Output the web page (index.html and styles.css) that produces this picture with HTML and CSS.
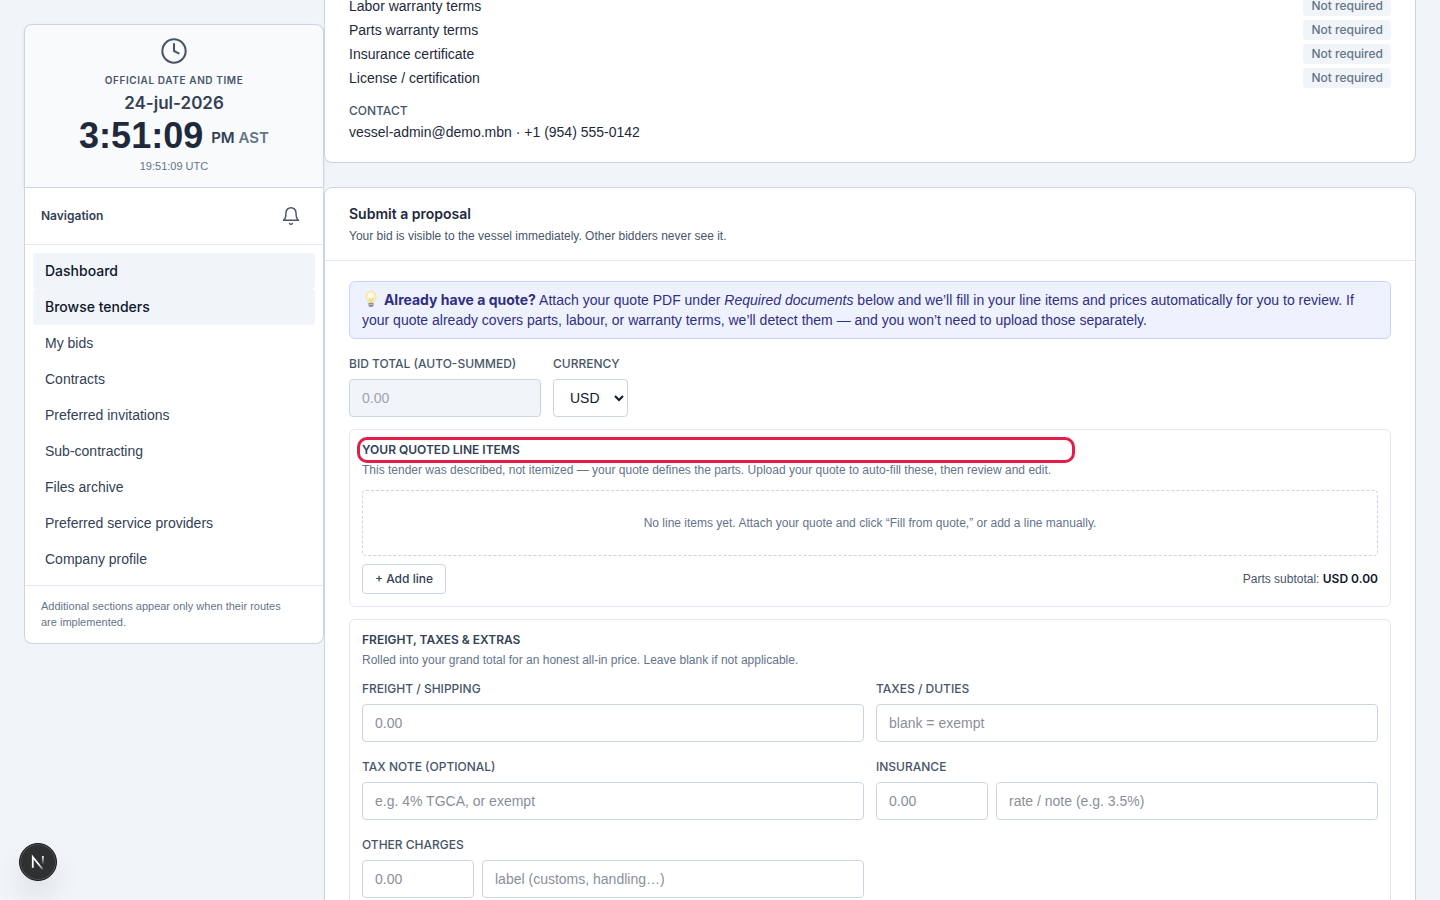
FILE: index.html
```html
<!DOCTYPE html>
<html lang="en">
<head>
<meta charset="utf-8">
<meta name="viewport" content="width=device-width, initial-scale=1">
<title>Submit a proposal</title>
<link rel="stylesheet" href="styles.css">
</head>
<body>
<div class="shell">
  <aside class="sidebar">
    <section class="clock">
      <svg class="clock-icon" viewBox="0 0 24 24" fill="none" stroke="currentColor" stroke-width="1.75" stroke-linecap="round" stroke-linejoin="round" aria-hidden="true"><circle cx="12" cy="12" r="10"/><path d="M12 6v6l4 2"/></svg>
      <p class="clock-label">Official date and time</p>
      <p class="clock-date">24-jul-2026</p>
      <p class="clock-row"><span class="clock-time">3:51:09</span><span class="clock-zone"><span class="clock-pm">PM</span> AST</span></p>
      <p class="clock-utc">19:51:09 UTC</p>
    </section>
    <div class="panel">
      <div class="nav-head">
        <h2 class="nav-title">Navigation</h2>
        <button class="bell" type="button" aria-label="Notifications">
          <svg class="bell-icon" viewBox="0 0 24 24" fill="none" stroke="currentColor" stroke-width="1.75" stroke-linecap="round" stroke-linejoin="round" aria-hidden="true"><path d="M18 8A6 6 0 0 0 6 8c0 7-3 9-3 9h18s-3-2-3-9"/><path d="M13.73 21a2 2 0 0 1-3.46 0"/></svg>
        </button>
      </div>
      <nav class="nav">
        <a class="nav-link active" href="#">Dashboard</a>
        <a class="nav-link active" href="#">Browse tenders</a>
        <a class="nav-link" href="#">My bids</a>
        <a class="nav-link" href="#">Contracts</a>
        <a class="nav-link" href="#">Preferred invitations</a>
        <a class="nav-link" href="#">Sub-contracting</a>
        <a class="nav-link" href="#">Files archive</a>
        <a class="nav-link" href="#">Preferred service providers</a>
        <a class="nav-link" href="#">Company profile</a>
      </nav>
      <p class="nav-note">Additional sections appear only when their routes are implemented.</p>
    </div>
  </aside>

  <main class="main">
    <section class="card card-details">
      <ul class="docs">
        <li class="doc"><span>Labor warranty terms</span><span class="pill">Not required</span></li>
        <li class="doc"><span>Parts warranty terms</span><span class="pill">Not required</span></li>
        <li class="doc"><span>Insurance certificate</span><span class="pill">Not required</span></li>
        <li class="doc"><span>License / certification</span><span class="pill">Not required</span></li>
      </ul>
      <h3 class="label contact-label">Contact</h3>
      <p class="contact">vessel-admin@demo.mbn · +1 (954) 555-0142</p>
    </section>

    <section class="card">
      <header class="card-head">
        <h2 class="card-title">Submit a proposal</h2>
        <p class="card-sub">Your bid is visible to the vessel immediately. Other bidders never see it.</p>
      </header>
      <form class="card-body">
        <p class="callout"><svg class="bulb" viewBox="0 0 18 18" aria-hidden="true"><path d="M9 1a5.3 5.3 0 0 0-5.3 5.3c0 2.7 1.9 3.7 2.5 6.7h5.6c.6-3 2.5-4 2.5-6.7A5.3 5.3 0 0 0 9 1z" fill="#fbeeb4" stroke="#eddca0" stroke-width=".6"/><ellipse cx="8.6" cy="5.6" rx="2.8" ry="3.2" fill="#fffbe6"/><path d="M7.6 8l.8 5M10.4 8l-.8 5" stroke="#e2bd62" stroke-width=".7" fill="none"/><path d="M6.4 13h5.2v2.6L10.400 17H7.600L6.400 15.600z" fill="#8d939b"/><path d="M6.400 14.500h5.200" stroke="#c6cad0" stroke-width=".7"/></svg> <strong>Already have a quote?</strong> Attach your quote PDF under <em>Required documents</em> below and we’ll fill in your line items and prices automatically for you to review. If your quote already covers parts, labour, or warranty terms, we’ll detect them — and you won’t need to upload those separately.</p>

        <div class="totals">
          <div class="field field-total">
            <label class="label" for="total">Bid total (auto-summed)</label>
            <input class="input input-readonly" id="total" type="text" placeholder="0.00" readonly>
          </div>
          <div class="field">
            <label class="label" for="currency">Currency</label>
            <select class="input select" id="currency"><option>USD</option></select>
          </div>
        </div>

        <section class="box">
          <div class="box-head box-head-narrow">
            <h3 class="box-title marked">Your quoted line items</h3>
            <p class="box-sub">This tender was described, not itemized — your quote defines the parts. Upload your quote to auto-fill these, then review and edit.</p>
          </div>
          <p class="empty">No line items yet. Attach your quote and click “Fill from quote,” or add a line manually.</p>
          <div class="box-foot">
            <button class="add" type="button">+ Add line</button>
            <p class="subtotal">Parts subtotal: <strong>USD 0.00</strong></p>
          </div>
        </section>

        <section class="box">
          <div class="box-head">
            <h3 class="box-title">Freight, taxes &amp; extras</h3>
            <p class="box-sub">Rolled into your grand total for an honest all-in price. Leave blank if not applicable.</p>
          </div>
          <div class="grid">
            <div class="field">
              <label class="label" for="freight">Freight / shipping</label>
              <input class="input" id="freight" type="text" placeholder="0.00">
            </div>
            <div class="field">
              <label class="label" for="taxes">Taxes / duties</label>
              <input class="input" id="taxes" type="text" placeholder="blank = exempt">
            </div>
            <div class="field">
              <label class="label" for="taxnote">Tax note (optional)</label>
              <input class="input" id="taxnote" type="text" placeholder="e.g. 4% TGCA, or exempt">
            </div>
            <div class="field">
              <label class="label" for="insurance">Insurance</label>
              <div class="pair">
                <input class="input input-amount" id="insurance" type="text" placeholder="0.00">
                <input class="input" type="text" placeholder="rate / note (e.g. 3.5%)" aria-label="Insurance rate or note">
              </div>
            </div>
            <div class="field">
              <label class="label" for="other">Other charges</label>
              <div class="pair">
                <input class="input input-amount" id="other" type="text" placeholder="0.00">
                <input class="input" type="text" placeholder="label (customs, handling…)" aria-label="Other charges label">
              </div>
            </div>
          </div>
        </section>
      </form>
    </section>
  </main>
</div>
<button class="dev" type="button" aria-label="Open developer tools">
  <svg class="dev-icon" viewBox="0 0 40 40" fill="none" aria-hidden="true">
    <defs>
      <linearGradient id="fade-a" x1="21" y1="22" x2="26" y2="29" gradientUnits="userSpaceOnUse"><stop stop-color="#fff"/><stop offset="1" stop-color="#fff" stop-opacity="0.2"/></linearGradient>
      <linearGradient id="fade-b" x1="26" y1="13" x2="26" y2="23" gradientUnits="userSpaceOnUse"><stop stop-color="#fff"/><stop offset="1" stop-color="#fff" stop-opacity="0"/></linearGradient>
    </defs>
    <path d="M14.200 26.500V14.500L25.200 28" stroke="url(#fade-a)" stroke-width="2"/>
    <rect x="24.400" y="13.300" width="2" height="9.700" fill="url(#fade-b)"/>
  </svg>
</button>
</body>
</html>
```

FILE: styles.css
```css
*, *::before, *::after { box-sizing: border-box; }

body, h2, h3, p, ul { margin: 0; padding: 0; }

:root {
  --text: "Liberation Sans", Arial, sans-serif;
  --strong: Inter, "Liberation Sans", sans-serif;
}

body {
  background: #f1f5f9;
  color: #1e293b;
  font-family: var(--text);
  font-size: 14px;
  line-height: 20px;
}

h2, h3, strong, .label { font-family: var(--strong); }

input, select, button { font: inherit; margin: 0; }

.shell {
  display: flex;
  align-items: flex-start;
  height: 100vh;
  padding: 0 24px;
  overflow: hidden;
}

/* Sidebar */
.sidebar {
  flex: none;
  width: 300px;
  margin-top: 24px;
}

.clock {
  display: flex;
  flex-direction: column;
  align-items: center;
  padding: 12px 12px 13px;
  background: #f8fafc;
  border: 1px solid #cbd5e1;
  border-radius: 8px 8px 0 0;
  box-shadow: 0 1px 3px rgba(15, 23, 42, 0.1);
}

.clock-icon { width: 28px; height: 28px; color: #475569; }

.clock-label {
  margin-top: 8px;
  color: #475569;
  font-family: var(--strong);
  font-size: 10px;
  font-weight: 600;
  line-height: 15px;
  letter-spacing: 0.06em;
  text-transform: uppercase;
}

.clock-date {
  margin-top: 3px;
  color: #334155;
  font-family: var(--strong);
  font-size: 17px;
  font-weight: 600;
  line-height: 24px;
}

.clock-row {
  display: flex;
  align-items: center;
  gap: 8px;
  margin-top: 3px;
}

.clock-time {
  font-size: 36px;
  font-weight: 700;
  line-height: 36px;
}

.clock-zone {
  padding-top: 4px;
  color: #64748b;
  font-family: var(--strong);
  font-size: 15px;
  font-weight: 600;
}

.clock-pm { color: #334155; }

.clock-utc {
  margin-top: 4px;
  color: #64748b;
  font-size: 11px;
  line-height: 16px;
}

.panel {
  background: #fff;
  border: 1px solid #cbd5e1;
  border-top: 0;
  border-radius: 0 0 8px 8px;
}

.nav-head {
  display: flex;
  align-items: center;
  justify-content: space-between;
  padding: 12px 16px;
  border-bottom: 1px solid #e2e8f0;
}

.nav-title { color: #334155; font-size: 12px; font-weight: 600; line-height: 16px; }

.bell {
  display: grid;
  place-items: center;
  width: 32px;
  height: 32px;
  padding: 0;
  background: none;
  border: 0;
  color: #475569;
}

.bell-icon { width: 20px; height: 20px; }

.nav { display: flex; flex-direction: column; padding: 8px; }

.nav-link {
  padding: 8px 12px;
  border-radius: 4px;
  color: #334155;
  text-decoration: none;
}

.nav-link.active {
  background: #f1f5f9;
  color: #0f172a;
  font-family: var(--strong);
  font-weight: 500;
}

.nav-note {
  padding: 12px 32px 13px 16px;
  border-top: 1px solid #e2e8f0;
  color: #64748b;
  font-size: 11px;
  line-height: 16px;
}

/* Main column */
.main {
  display: flex;
  flex: 1;
  flex-direction: column;
  gap: 24px;
  min-width: 0;
}

.card {
  background: #fff;
  border: 1px solid #cbd5e1;
  border-radius: 8px;
}

.card-details {
  padding: 0 24px 20px;
  border-top: 0;
  border-radius: 0 0 8px 8px;
}

.docs {
  display: flex;
  flex-direction: column;
  gap: 4px;
  margin-top: -4px;
  list-style: none;
}

.doc { display: flex; align-items: center; justify-content: space-between; }

.pill {
  padding: 2px 8px;
  background: #f1f5f9;
  border-radius: 4px;
  color: #64748b;
  font-family: var(--strong);
  font-size: 12px;
  font-weight: 500;
  line-height: 16px;
}

.label {
  color: #475569;
  font-size: 12px;
  font-weight: 500;
  line-height: 18px;
  text-transform: uppercase;
}

.contact-label { margin: 14px 0 2px; }

.card-head { padding: 16px 24px; border-bottom: 1px solid #e2e8f0; }
.card-title { font-size: 14px; font-weight: 600; line-height: 20px; }
.card-sub { margin-top: 4px; color: #475569; font-size: 12px; line-height: 16px; }

.card-body {
  display: flex;
  flex-direction: column;
  gap: 12px;
  padding: 20px 24px;
}

.callout {
  margin-bottom: 4px;
  padding: 8px 12px;
  background: #eef2ff;
  border: 1px solid #c7d2fe;
  border-radius: 6px;
  color: #312e81;
}

.callout strong { font-weight: 700; line-height: 16px; }
.bulb { width: 18px; height: 18px; vertical-align: -3px; }

.totals { display: flex; gap: 12px; }
.field { display: flex; flex-direction: column; gap: 6px; min-width: 0; }
.field-total { width: 192px; }
.field-total .label { white-space: nowrap; }

.input {
  width: 100%;
  min-width: 0;
  height: 38px;
  padding: 8px 12px;
  background: #fff;
  border: 1px solid #cbd5e1;
  border-radius: 4px;
  color: #0f172a;
}

.input::placeholder { color: #8a8f9a; opacity: 1; }
.input-readonly { background: #f1f5f9; }
.input-readonly::placeholder { color: #9ca3af; }
.select { width: 75px; padding-right: 0; }

.box { padding: 12px; border: 1px solid #e2e8f0; border-radius: 6px; }
.box-head { margin-bottom: 12px; }
.box-head-narrow { max-width: 708px; }

.box-title {
  color: #334155;
  font-size: 12px;
  font-weight: 600;
  line-height: 16px;
  text-transform: uppercase;
}

.box-sub { margin-top: 4px; color: #64748b; font-size: 12px; line-height: 16px; }

.marked { position: relative; }

.marked::after {
  content: "";
  position: absolute;
  inset: -5px;
  border: 3px solid #e11d48;
  border-radius: 10px;
}

.empty {
  padding: 24px;
  border: 1px dashed #cbd5e1;
  border-radius: 4px;
  color: #64748b;
  font-size: 12px;
  line-height: 16px;
  text-align: center;
}

.box-foot {
  display: flex;
  align-items: center;
  justify-content: space-between;
  margin-top: 8px;
}

.add {
  padding: 6px 12px;
  background: #fff;
  border: 1px solid #cbd5e1;
  border-radius: 4px;
  color: #334155;
  font-family: var(--strong);
  font-size: 12px;
  font-weight: 500;
  line-height: 16px;
}

.subtotal { color: #475569; font-size: 12px; line-height: 16px; }
.subtotal strong { color: #0f172a; font-weight: 600; }

.grid {
  display: grid;
  grid-template-columns: 1fr 1fr;
  gap: 16px 12px;
}

.pair { display: flex; gap: 8px; }
.input-amount { flex: none; width: 112px; }

/* Floating developer badge */
.dev {
  position: fixed;
  bottom: 19px;
  left: 19px;
  width: 38px;
  height: 38px;
  padding: 0;
  background: #2e3032;
  border: 1px solid #171717;
  border-radius: 50%;
  box-shadow: inset 0 0 0 1px #515456, 0 16px 32px -8px rgba(0, 0, 0, 0.24);
}

.dev-icon { display: block; width: 36px; height: 36px; }
```
